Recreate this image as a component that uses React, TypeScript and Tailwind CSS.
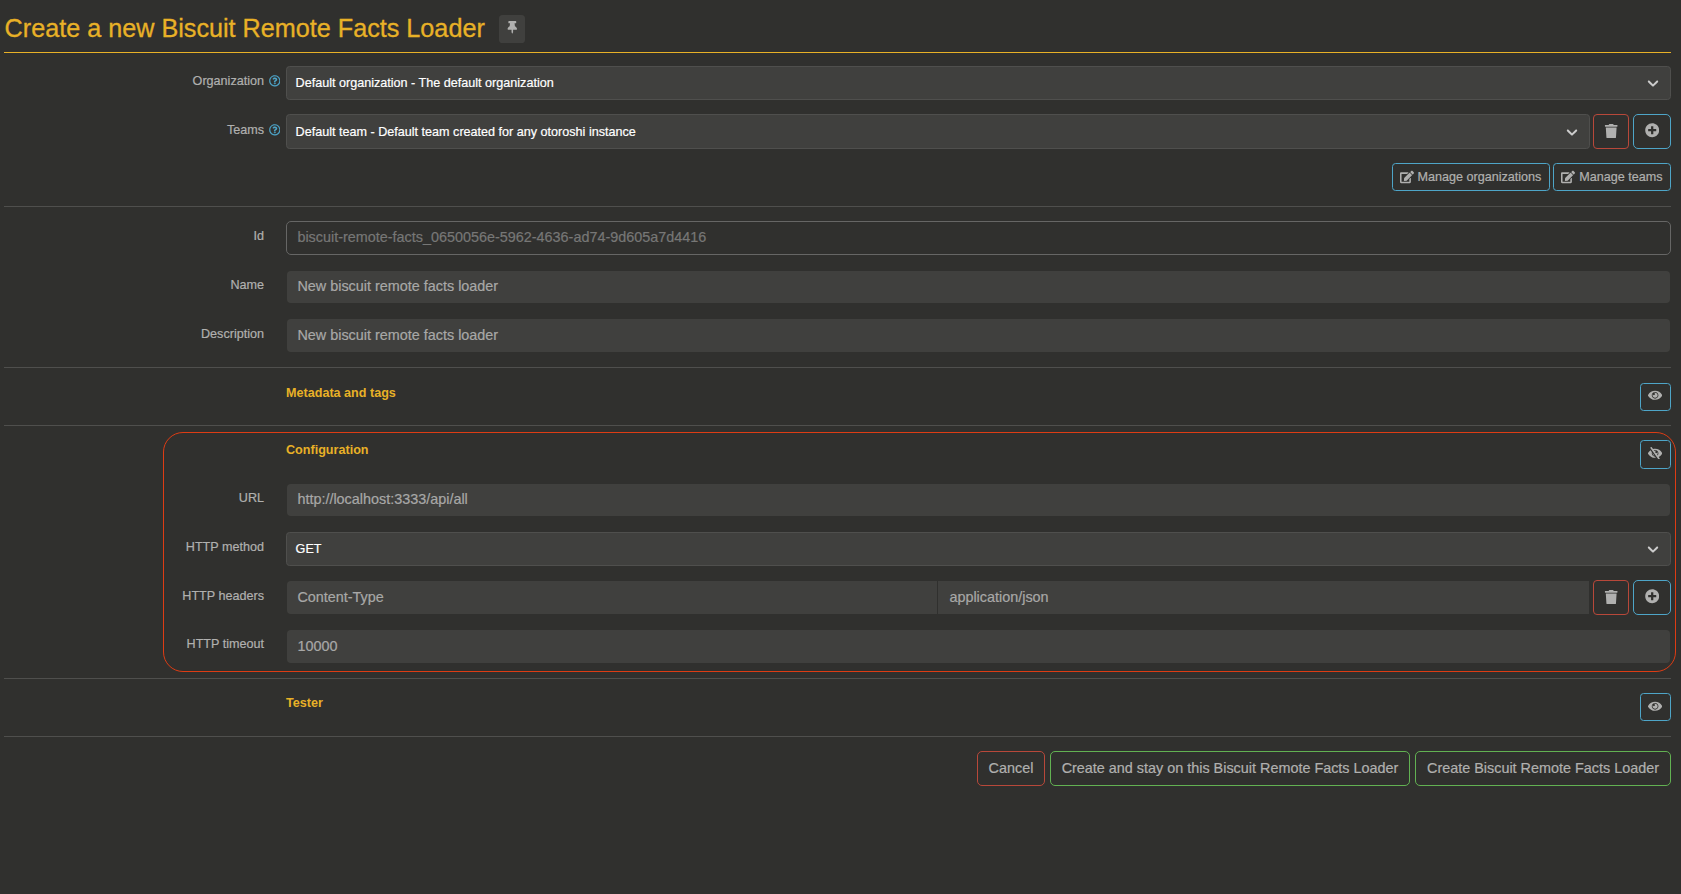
import type { ReactNode } from "react";
import { FaThumbtack, FaTrash, FaPlusCircle, FaEdit, FaRegQuestionCircle } from "react-icons/fa";

function EyeIcon() {
  return (
    <svg viewBox="0 0 576 512" className="h-[12.6px] w-[14.2px] fill-current">
      <path d="M569.354 231.631C512.969 135.949 407.81 72 288 72 168.14 72 63.004 135.994 6.646 231.631a47.999 47.999 0 0 0 0 48.739C63.031 376.051 168.19 440 288 440c119.86 0 224.996-63.994 281.354-159.631a47.997 47.997 0 0 0 0-48.738zM288 392c-75.162 0-136-60.827-136-136 0-75.162 60.826-136 136-136 75.162 0 136 60.826 136 136 0 75.162-60.826 136-136 136zm104-136c0 57.438-46.562 104-104 104s-104-46.562-104-104c0-17.708 4.431-34.379 12.236-48.973l-.001.032c0 23.651 19.173 42.823 42.824 42.823s42.824-19.173 42.824-42.823c0-23.651-19.173-42.824-42.824-42.824l-.032.001C253.621 156.431 270.292 152 288 152c57.438 0 104 46.562 104 104z" />
    </svg>
  );
}

function EyeSlashIcon() {
  return (
    <svg viewBox="0 0 576 512" className="h-[12.6px] w-[14.2px] fill-current">
      <path d="M286.693 391.984l32.579 46.542A333.958 333.958 0 0 1 288 440C168.19 440 63.031 376.051 6.646 280.369a47.999 47.999 0 0 1 0-48.739c24.023-40.766 56.913-75.775 96.024-102.537l57.077 81.539C154.736 224.82 152 240.087 152 256c0 74.736 60.135 135.282 134.693 135.984zm282.661-111.615c-31.667 53.737-78.747 97.46-135.175 125.475l.011.015 41.47 59.2c7.6 10.86 4.96 25.82-5.9 33.42l-13.11 9.18c-10.86 7.6-25.82 4.96-33.42-5.9L100.34 46.94c-7.6-10.86-4.96-25.82 5.9-33.42l13.11-9.18c10.86-7.6 25.82-4.96 33.42 5.9l51.038 72.617C230.68 75.776 258.905 72 288 72c119.81 0 224.969 63.949 281.354 159.631a48.002 48.002 0 0 1 0 48.738zM424 256c0-75.174-60.838-136-136-136-17.939 0-35.056 3.473-50.729 9.772l19.299 27.058c25.869-8.171 55.044-6.163 80.4 7.41h-.03c-23.65 0-42.82 19.17-42.82 42.82 0 23.626 19.147 42.82 42.82 42.82 23.65 0 42.82-19.17 42.82-42.82v-.03c18.462 34.49 16.312 77.914-8.25 110.95v.01l19.314 27.061C411.496 321.2 424 290.074 424 256zM262.014 356.727l-77.53-110.757c-5.014 52.387 29.314 98.354 77.53 110.757z" />
    </svg>
  );
}

function Row({ label, help, children, className, labelClass = "pt-[5px]" }: { label: string; help?: boolean; children: ReactNode; className: string; labelClass?: string }) {
  return (
    <div className={`flex items-start ${className}`}>
      <div className={`flex w-[282px] shrink-0 justify-end pr-[22px] leading-5 ${labelClass}`}>
        <span className="relative whitespace-nowrap">
          {label}
          {help && (
            <FaRegQuestionCircle className="absolute top-[4px] left-full ml-[4.6px] size-[11.6px] stroke-[#4ea5c8] stroke-[6px] text-[#4ea5c8]" />
          )}
        </span>
      </div>
      <div className="flex min-w-0 flex-1 items-start">{children}</div>
    </div>
  );
}

function Select({ value, className }: { value: string; className: string }) {
  return (
    <div className={`flex flex-1 items-center justify-between rounded-[3.6px] border border-[#4f4f4d] bg-[#40403e] pr-[8px] pl-[8.6px] text-white ${className}`}>
      <span>{value}</span>
      <svg viewBox="0 0 20 20" className="mb-px size-[18px] fill-[#cccccc]">
        <path d="M4.516 7.548c0.436-0.446 1.043-0.481 1.576 0l3.908 3.747 3.908-3.747c0.533-0.481 1.141-0.446 1.574 0 0.436 0.445 0.408 1.197 0 1.615-0.406 0.418-4.695 4.502-4.695 4.502-0.217 0.223-0.502 0.335-0.787 0.335s-0.57-0.112-0.789-0.335c0 0-4.287-4.084-4.695-4.502s-0.436-1.17 0-1.615z" />
      </svg>
    </div>
  );
}

function Field({ value, className }: { value: string; className: string }) {
  return (
    <div className={`flex items-center bg-[#40403e] text-[14.4px] text-[#a8a8a7] ${className}`}>
      {value}
    </div>
  );
}

function AddRemove() {
  return (
    <>
      <button className="ml-[3px] flex h-[35px] w-9 items-center justify-center rounded-[4px] border border-[#b8483a] pb-px">
        <FaTrash className="size-[14.4px]" />
      </button>
      <button className="ml-1 flex h-[35px] w-[38px] items-center justify-center rounded-[5px] border border-[#4ea5c8] pb-[2px]">
        <FaPlusCircle className="size-[14.4px]" />
      </button>
    </>
  );
}

function Section({ title, open, className, buttonClass = "h-7 pb-[3px]" }: { title: string; open?: boolean; className: string; buttonClass?: string }) {
  return (
    <div className={`flex items-start justify-between pl-[282px] ${className}`}>
      <h2 className="leading-5 font-bold text-[#e8b127] [-webkit-text-stroke:0]">{title}</h2>
      <button className={`flex w-[31px] items-center justify-center rounded-[3.6px] border border-[#4ea5c8] pr-[0.4px] ${buttonClass}`}>
        {open ? <EyeSlashIcon /> : <EyeIcon />}
      </button>
    </div>
  );
}

const Divider = ({ className }: { className: string }) => <div className={`h-px bg-[#4f4f4d] ${className}`} />;

export default function App() {
  return (
    <div className="relative h-[894px] w-[1681px] bg-[#30302e] pr-[10px] pl-1 font-['Liberation_Sans',Arial,sans-serif] text-[12.6px] text-[#b0b0af] [-webkit-text-stroke:0.2px]">
      <header className="flex h-[53px] items-start border-b border-[#e8b127] pt-[13px]">
        <h1 className="pl-[0.6px] text-[25.2px] leading-[30px] text-[#e8b127] [-webkit-text-stroke:0.3px]">Create a new Biscuit Remote Facts Loader</h1>
        <button className="mt-[2px] ml-[14.4px] flex h-7 w-[26px] items-center justify-center rounded-[3.6px] bg-[#40403e] pb-[3px]">
          <FaThumbtack className="size-[12.6px]" />
        </button>
      </header>

      <Row label="Organization" help className="pt-[13px]">
        <Select value="Default organization - The default organization" className="h-[34px]" />
      </Row>
      <Row label="Teams" help className="pt-[14px]" labelClass="pt-[6px]">
        <Select value="Default team - Default team created for any otoroshi instance" className="h-[35px] pt-px" />
        <AddRemove />
      </Row>
      <div className="mt-[14px] flex justify-end gap-[3px]">
        <button className="flex h-7 w-[158px] items-center justify-center gap-[3.8px] rounded-[3.6px] border border-[#4ea5c8] pr-px">
          <FaEdit className="mb-px size-[14px]" />
          Manage organizations
        </button>
        <button className="flex h-7 w-[118px] items-center justify-center gap-[4px] rounded-[3.6px] border border-[#4ea5c8] pr-[0.4px]">
          <FaEdit className="mb-px size-[14px]" />
          Manage teams
        </button>
      </div>
      <Divider className="mt-[15px]" />

      <Row label="Id" className="pt-[14px]">
        <div className="flex h-[34px] flex-1 items-center rounded-[5px] border border-[#666665] pl-[10.4px] text-[14.4px] text-[#777776]">
          biscuit-remote-facts_0650056e-5962-4636-ad74-9d605a7d4416
        </div>
      </Row>
      <Row label="Name" className="pt-[16px]" labelClass="pt-[4px]">
        <Field value="New biscuit remote facts loader" className="mx-px h-8 flex-1 rounded-[4px] pl-[10.4px]" />
      </Row>
      <Row label="Description" className="pt-[16px]">
        <Field value="New biscuit remote facts loader" className="mx-px h-[33px] flex-1 rounded-[4px] pl-[10.4px]" />
      </Row>
      <Divider className="mt-[15px]" />
      <Section title="Metadata and tags" className="pt-[15px]" />
      <Divider className="mt-[14px]" />

      <Section title="Configuration" open className="pt-[14px]" buttonClass="-mb-px h-[29px] pb-[3px]" />
      <Row label="URL" className="pt-[16px]" labelClass="pt-[4px]">
        <Field value="http://localhost:3333/api/all" className="mx-px h-8 flex-1 rounded-[4px] pl-[10.4px]" />
      </Row>
      <Row label="HTTP method" className="pt-[16px]">
        <Select value="GET" className="h-[34px]" />
      </Row>
      <Row label="HTTP headers" className="pt-[14px]" labelClass="pt-[6px]">
        <div className="mt-px ml-px flex flex-1 gap-px pr-px">
          <Field value="Content-Type" className="h-[33px] w-[650px] rounded-l-[4px] pl-[10.4px]" />
          <Field value="application/json" className="h-[33px] flex-1 pl-[11.4px]" />
        </div>
        <AddRemove />
      </Row>
      <Row label="HTTP timeout" className="pt-[15px]" labelClass="pt-[4px]">
        <Field value="10000" className="mx-px h-[33px] flex-1 rounded-[4px] pl-[10.4px]" />
      </Row>
      <Divider className="mt-[15px]" />
      <Section title="Tester" className="pt-[14px]" buttonClass="h-7 pb-[2px]" />
      <Divider className="mt-[15px]" />

      <footer className="mt-[14px] flex justify-end gap-[5px] text-[14.4px]">
        <button className="h-[35px] w-[68px] rounded-[5px] border border-[#b8483a]">Cancel</button>
        <button className="h-[35px] w-[360px] rounded-[5px] border border-[#62b152] whitespace-nowrap">
          Create and stay on this Biscuit Remote Facts Loader
        </button>
        <button className="h-[35px] w-[256px] rounded-[5px] border border-[#62b152] whitespace-nowrap">
          Create Biscuit Remote Facts Loader
        </button>
      </footer>

      <div className="pointer-events-none absolute top-[432px] left-[163px] h-[240px] w-[1513px] rounded-[20px] border border-[#dd3c14]" />
    </div>
  );
}
